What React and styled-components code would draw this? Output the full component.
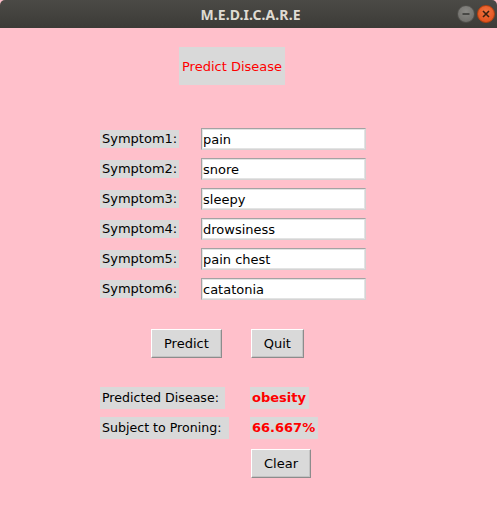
import React from "react";
import styled, { createGlobalStyle } from "styled-components";

const GlobalStyle = createGlobalStyle`
  html, body {
    margin: 0;
    padding: 0;
    background-color: #ffc0cb;
  }
  * {
    box-sizing: border-box;
  }
`;

const symptoms = ["pain", "snore", "sleepy", "drowsiness", "pain chest", "catatonia"];

const App = () => {
  return (
    <Window>
      <GlobalStyle />
      <TitleBar>
        <span />
        <Title>M.E.D.I.C.A.R.E</Title>
        <Controls>
          <Circle>
            <svg width="8" height="8" viewBox="0 0 8 8">
              <line x1="0.5" y1="4" x2="7.5" y2="4" stroke="#3a3a38" strokeWidth="1.6" />
            </svg>
          </Circle>
          <Circle close>
            <svg width="8" height="8" viewBox="0 0 8 8">
              <path d="M1 1 L7 7 M7 1 L1 7" stroke="#3a2010" strokeWidth="1.6" />
            </svg>
          </Circle>
        </Controls>
      </TitleBar>

      <Body>
        <HeaderRow>
          <Heading>Predict Disease</Heading>
        </HeaderRow>

        <Form>
          {symptoms.map((s, i) => (
            <Row key={i}>
              <LabelCell>
                <Label>Symptom{i + 1}:</Label>
              </LabelCell>
              <Entry defaultValue={s} />
            </Row>
          ))}
        </Form>

        <ButtonRow>
          <Button>Predict</Button>
          <Button>Quit</Button>
        </ButtonRow>

        <Results>
          <ResultRow>
            <ResultCell>
              <ResultLabel>Predicted Disease:</ResultLabel>
            </ResultCell>
            <Value>obesity</Value>
          </ResultRow>
          <ResultRow>
            <ResultCell>
              <ResultLabel wide>Subject to Proning:</ResultLabel>
            </ResultCell>
            <Value>66.667%</Value>
          </ResultRow>
          <ClearRow>
            <Button>Clear</Button>
          </ClearRow>
        </Results>
      </Body>
    </Window>
  );
};

export default App;

const Window = styled.div`
  width: 497px;
  height: 526px;
  display: flex;
  flex-direction: column;
  background-color: #ffc0cb;
  font-family: "DejaVu Sans", sans-serif;
  font-size: 13px;
  color: #000;
`;

const TitleBar = styled.div`
  height: 28px;
  display: grid;
  grid-template-columns: 1fr auto 1fr;
  align-items: center;
  background: linear-gradient(#4b4a46, #3c3b37);
  border-radius: 5px 5px 0 0;
`;

const Title = styled.div`
  font-family: "Noto Sans", "DejaVu Sans", sans-serif;
  font-weight: bold;
  font-size: 14px;
  letter-spacing: 0.1px;
  color: #dfdbd2;
  padding-left: 4px;
`;

const Controls = styled.div`
  justify-self: end;
  display: flex;
  gap: 2px;
  padding-right: 2px;
`;

const Circle = styled.div`
  width: 18px;
  height: 18px;
  border-radius: 50%;
  display: flex;
  align-items: center;
  justify-content: center;
  background: ${(p) =>
    p.close
      ? "radial-gradient(circle at 50% 35%, #f2733f, #df4a16)"
      : "radial-gradient(circle at 50% 35%, #8a8985, #6a6965)"};
  border: 1px solid ${(p) => (p.close ? "#b5400f" : "#4f4e4a")};
`;

const Body = styled.div`
  flex: 1;
  display: flex;
  flex-direction: column;
  padding-top: 19px;
`;

const HeaderRow = styled.div`
  display: flex;
  padding-left: 179px;
`;

const Heading = styled.div`
  background-color: #d9d9d9;
  color: #ff0000;
  height: 38px;
  width: 106px;
  display: flex;
  align-items: center;
  justify-content: center;
`;

const Form = styled.div`
  display: flex;
  flex-direction: column;
  margin-top: 39px;
`;

const Row = styled.div`
  height: 30px;
  display: flex;
  align-items: center;
  padding-left: 100px;
`;

const LabelCell = styled.div`
  width: 101px;
  display: flex;
`;

const Label = styled.div`
  background-color: #d9d9d9;
  height: 18px;
  line-height: 18px;
  padding: 0 2px 0 2px;
`;

const Entry = styled.input`
  width: 165px;
  height: 22px;
  border: 1px solid #a3a3a3;
  border-bottom-color: #d4d4d4;
  border-right-color: #d4d4d4;
  outline: 1px solid #e3e3e3;
  outline-offset: -2px;
  background: #fff;
  font-family: "DejaVu Sans", sans-serif;
  font-size: 13px;
  color: #000;
  padding: 0 0 0 1px;
`;

const ButtonRow = styled.div`
  display: flex;
  padding-left: 151px;
  gap: 29px;
  margin-top: 25px;
`;

const Button = styled.div`
  height: 29px;
  padding: 0 12px;
  display: flex;
  align-items: center;
  justify-content: center;
  background-color: #d9d9d9;
  border: 1px solid;
  border-color: #ffffff #8c8c8c #8c8c8c #ffffff;
  box-shadow: inset -1px -1px 0 #c3c3c3;
  cursor: pointer;
`;

const Results = styled.div`
  display: flex;
  flex-direction: column;
  gap: 8px;
  margin-top: 29px;
  padding-left: 100px;
`;

const ResultRow = styled.div`
  display: flex;
  height: 22px;
`;

const ResultCell = styled.div`
  width: 150px;
  display: flex;
`;

const ResultLabel = styled.div`
  background-color: #d9d9d9;
  line-height: 22px;
  padding: 0 ${(p) => (p.wide ? "8px" : "6px")} 0 2px;
  font-size: 12.6px;
`;

const Value = styled.div`
  background-color: #d9d9d9;
  color: #ff0000;
  font-weight: bold;
  font-size: 13px;
  line-height: 22px;
  padding: 0 3px 0 2px;
`;

const ClearRow = styled.div`
  display: flex;
  padding-left: 151px;
  margin-top: 2px;
`;
